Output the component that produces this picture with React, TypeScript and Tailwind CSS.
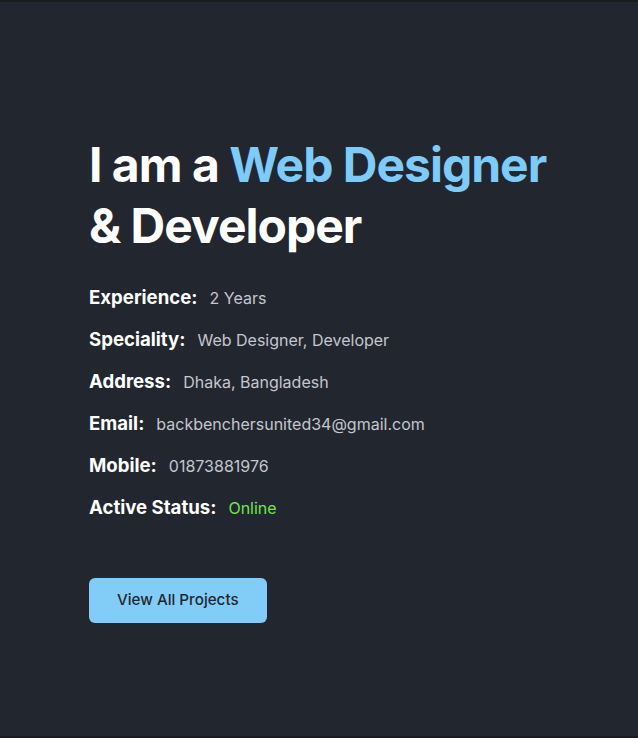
import React from "react";

const details = [
  { label: "Experience:", value: "2 Years" },
  { label: "Speciality:", value: "Web Designer, Developer" },
  { label: "Address:", value: "Dhaka, Bangladesh" },
  { label: "Email:", value: "backbenchersunited34@gmail.com" },
  { label: "Mobile:", value: "01873881976" },
  { label: "Active Status:", value: "Online", online: true },
];

export default function App() {
  return (
    <div
      className="h-[738px] w-full border-y-2 border-[#1a1c20] bg-[#22262e] pl-[89px] pt-[132px]"
      style={{ fontFamily: "Inter, 'Noto Sans', sans-serif" }}
    >
      <h1 className="whitespace-nowrap text-[48px] font-bold leading-[61px] tracking-[-1px] text-white">
        I am a <span className="text-[#7ecaf8]">Web Designer</span>
        <br />& Developer
      </h1>

      <div className="mt-[27px] flex flex-col gap-[13px]">
        {details.map((d) => (
          <div key={d.label} className="flex items-baseline gap-3 leading-7">
            <span className="text-[18.6px] font-bold text-white">{d.label}</span>
            <span
              className={
                d.online
                  ? "text-[16px] text-[#72e34b]"
                  : "text-[16px] text-[#c3c7ce]"
              }
            >
              {d.value}
            </span>
          </div>
        ))}
      </div>

      <button className="mt-[56px] h-[45px] rounded-md bg-[#82cdf8] px-7 text-[15.2px] font-medium text-[#1f2630]">
        View All Projects
      </button>
    </div>
  );
}
